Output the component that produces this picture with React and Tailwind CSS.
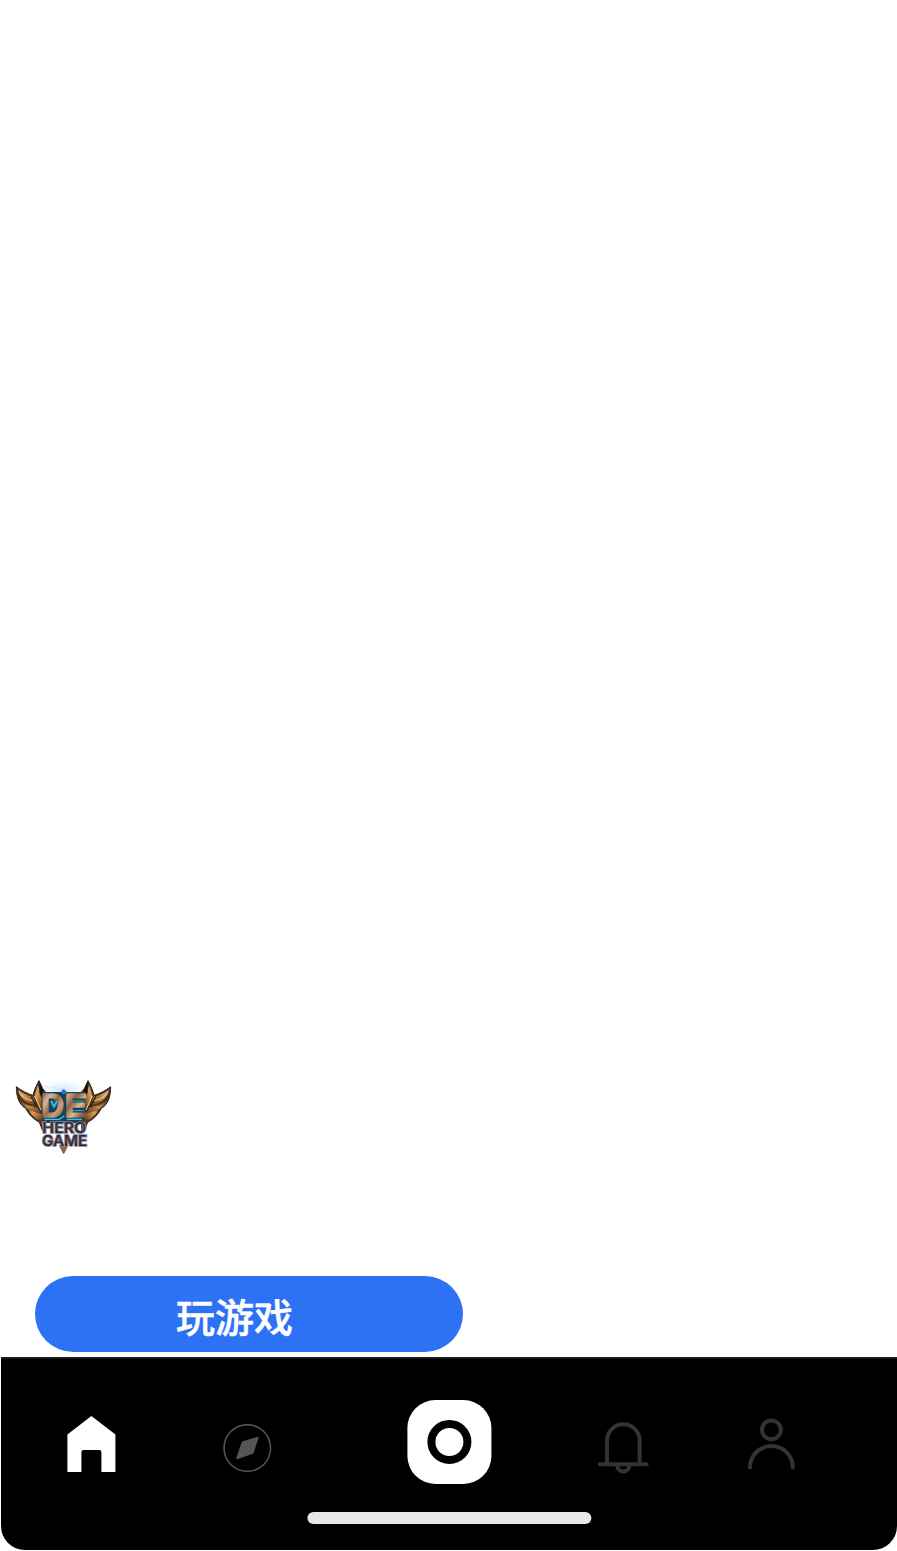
import React from "react";

function Feathers() {
  return (
    <g strokeLinejoin="round">
      <path d="M25 44 C25 78 35 99 53 109 C62 128 77 142 94 151 L104 176 L111 184 L113 150 L114 62 L104 50 L93 26 C85 40 78 56 75 70 C59 65 40 56 25 44Z" fill="#4a2f19" stroke="#2f2924" strokeWidth="3" />
      <path d="M28 50 C43 63 58 71 76 75 L87 101 C59 96 36 83 28 50Z" fill="url(#gold)" />
      <path d="M31 77 C45 96 66 103 85 104 L101 126 C72 119 42 108 31 77Z" fill="url(#bronze)" />
      <path d="M60 111 C74 118 88 123 102 127 L103 149 C86 144 70 131 60 111Z" fill="url(#gold)" />
      <path d="M89 39 L79 72 L101 117 L104 76Z" fill="url(#gold)" />
      <path d="M94 30 L107 56 L103 80 L94 62Z" fill="#17110d" />
      <path d="M33 57 C42 76 56 82 73 86 M80 72 L99 114" fill="none" stroke="#ffe0b0" strokeWidth="2.8" />
      <path d="M69 73 L85 103 L79 107" fill="none" stroke="#1e1510" strokeWidth="3" />
      <path d="M102 149 L107 174" stroke="#b96b30" strokeWidth="4" />
    </g>
  );
}

function HeroLogo() {
  return (
    <svg className="block h-[90px] w-[110px]" viewBox="0 0 330 270">
      <defs>
        <linearGradient id="gold" x1="0" y1="0" x2="1" y2="1">
          <stop offset="0" stopColor="#7d4f22" />
          <stop offset=".3" stopColor="#d7a260" />
          <stop offset=".6" stopColor="#a87135" />
          <stop offset="1" stopColor="#4b301a" />
        </linearGradient>
        <linearGradient id="bronze" x1="0" y1="0" x2="1" y2="1">
          <stop offset="0" stopColor="#302018" />
          <stop offset=".5" stopColor="#c58c49" />
          <stop offset="1" stopColor="#5a3218" />
        </linearGradient>
        <linearGradient id="letters" gradientUnits="userSpaceOnUse" x1="103" y1="56" x2="215" y2="142">
          <stop offset="0" stopColor="#72513d" />
          <stop offset=".2" stopColor="#d8b79a" />
          <stop offset=".36" stopColor="#9a6b4c" />
          <stop offset=".5" stopColor="#c9a283" />
          <stop offset=".65" stopColor="#8a624b" />
          <stop offset=".82" stopColor="#dfb78c" />
          <stop offset="1" stopColor="#7a5a46" />
        </linearGradient>
        <linearGradient id="metal" x1="0" y1="0" x2="0" y2="1">
          <stop offset="0" stopColor="#14283c" />
          <stop offset=".5" stopColor="#4d3335" />
          <stop offset="1" stopColor="#101a28" />
        </linearGradient>
        <radialGradient id="glow">
          <stop offset="0" stopColor="#78bbff" stopOpacity=".4" />
          <stop offset="1" stopColor="#8dccff" stopOpacity="0" />
        </radialGradient>
      </defs>
      <ellipse cx="165" cy="58" rx="65" ry="36" fill="url(#glow)" />
      <path d="M108 41 L122 48 M131 43 L144 48" stroke="#d3b4ff" strokeWidth="3" opacity=".5" />
      <Feathers />
      <g transform="matrix(-1 0 0 1 333 0)"><Feathers /></g>
      <path d="M104 60 H160 L167 66 L174 60 H232 V136 L219 151 H112 L102 136Z" fill="#1b4156" />
      <path d="M108 153 L120 148 H214 L224 153Z" fill="#23354a" />
      <path d="M154 220 L167 245 L180 220Z" fill="#99623d" stroke="#55443a" strokeWidth="2" />
      <g fontFamily="Liberation Sans, sans-serif" fontWeight="700">
        <text y="134" fontSize="102" fill="url(#letters)" stroke="url(#letters)" strokeWidth="5" className="[filter:drop-shadow(0_0_2px_#14303f)]">
          <tspan x="100" textLength="69" lengthAdjust="spacingAndGlyphs">D</tspan>
          <tspan x="170" textLength="68" lengthAdjust="spacingAndGlyphs">E</tspan>
        </text>
      </g>
      <path d="M109 142 H154 L169 131 M177 142 H222" stroke="#36c5f6" strokeWidth="4" fill="none" />
      <path d="M126 84 H149 V98 L139 113 L128 99Z" fill="#176577" />
      <path d="M129 87 L138 104 L147 87" fill="none" stroke="#55cfda" strokeWidth="4" />
      <path d="M194 87 H229 M194 116 H230" stroke="#2fb2d2" strokeWidth="3" />
      <path d="M159 58 L167 51 L175 58 L167 66Z" fill="#1774b8" />
      <g fontFamily="Inter, sans-serif" fontWeight="600" fontSize="42" fill="url(#metal)" stroke="#868c9e" strokeWidth="5" paintOrder="stroke">
        <text x="103" y="184" textLength="132" lengthAdjust="spacingAndGlyphs">HERO</text>
        <text x="102" y="222" textLength="136" lengthAdjust="spacingAndGlyphs">GAME</text>
      </g>
    </svg>
  );
}

export default function App() {
  return (
    <main className="flex h-[1551px] w-full flex-col overflow-hidden bg-white">
      <section className="flex flex-1 flex-col justify-end pb-[5px]">
        <div className="mb-[114px] ml-2"><HeroLogo /></div>
        <button className="ml-[35.3px] flex h-[76px] w-[428px] items-center justify-center rounded-[38px] bg-[#2d71f4] pt-[3px] pr-[29.6px] font-['Noto_Sans_CJK_SC',sans-serif] text-[39px] leading-none font-medium text-white [-webkit-text-stroke:0.5px_white]">玩游戏</button>
      </section>
      <nav className="mb-[0.6px] ml-[1.4px] h-[193.4px] w-[896px] shrink-0 rounded-b-[24px] border-t-2 border-[#1c1c1c] bg-black">
        <div className="flex h-[153px] items-start">
          <button className="mt-[57px] ml-[65.6px]" aria-label="首页">
            <svg className="block h-14 w-[49px]" viewBox="-0.4 0 49 56" fill="white"><path d="M24 0 48 18.5V56H34V36Q34 34 32 34H16Q14 34 14 36V56H0V18.5Z" /></svg>
          </button>
          <button className="mt-[65px] ml-[107px]" aria-label="发现">
            <svg className="block h-12 w-[49px]" viewBox="-0.4 0 49 48" fill="none"><circle cx="23.9" cy="24" r="23.3" stroke="#555" strokeWidth="1.5" /><path d="m18.5 17.5 15.2-4.6q2-.5 1.3 1.5L30 29.5 14.5 35q-2.2.5-1.6-1.3Z" fill="#555" /></svg>
          </button>
          <button className="mt-[41px] ml-[135px]" aria-label="拍摄">
            <svg className="block h-[84px] w-[85px]" viewBox="-0.4 0 85 84"><rect width="84" height="84" rx="28" fill="white" /><circle cx="42" cy="42" r="18" fill="none" stroke="black" strokeWidth="8" /></svg>
          </button>
          <button className="mt-[63px] ml-[106px]" aria-label="通知">
            <svg className="block size-[52px]" viewBox="0 0 52 52" fill="none" stroke="#333" strokeWidth="4" strokeLinecap="round"><path d="M1.9 42.3H48.7M9 42V18.65a16.35 16.35 0 0 1 32.7 0V42M19.3 43.6a6 6 0 0 0 12 0" /></svg>
          </button>
          <button className="mt-[59px] ml-[98px]" aria-label="我的">
            <svg className="block h-[54px] w-12" viewBox="0.1 0 48 54" fill="none" stroke="#333" strokeWidth="4" strokeLinecap="round"><circle cx="23.5" cy="11.8" r="9.4" /><path d="M2.1 49.4a21.4 21.4 0 0 1 42.8 0" /></svg>
          </button>
        </div>
        <svg className="mx-auto block h-3 w-[285px]" viewBox="0 0 285 12"><rect x="0.4" width="284" height="12" rx="6" fill="#e8e8e8" /></svg>
      </nav>
    </main>
  );
}
